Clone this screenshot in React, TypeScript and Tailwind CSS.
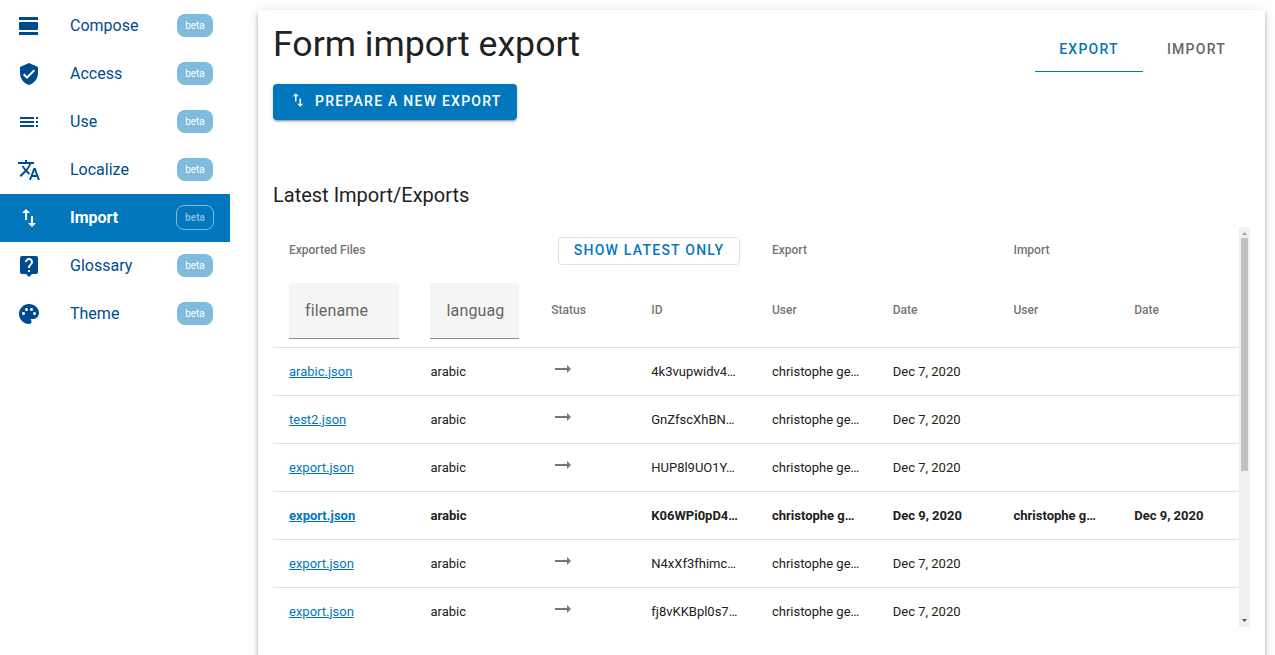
import type { IconType } from "react-icons";
import {
  MdArrowRightAlt,
  MdImportExport,
  MdLiveHelp,
  MdPalette,
  MdToc,
  MdTranslate,
  MdVerifiedUser,
} from "react-icons/md";

function ViewDay({ className }: { className?: string }) {
  return (
    <svg viewBox="0 0 24 24" fill="currentColor" className={className}>
      <path d="M2 21h19v-3H2v3zM20 8H3c-.55 0-1 .45-1 1v6c0 .55.45 1 1 1h17c.55 0 1-.45 1-1V9c0-.55-.45-1-1-1zM2 3v3h19V3H2z" />
    </svg>
  );
}

type NavEntry = { label: string; Icon: IconType | typeof ViewDay; active?: boolean };

const nav: NavEntry[] = [
  { label: "Compose", Icon: ViewDay },
  { label: "Access", Icon: MdVerifiedUser },
  { label: "Use", Icon: MdToc },
  { label: "Localize", Icon: MdTranslate },
  { label: "Import", Icon: MdImportExport, active: true },
  { label: "Glossary", Icon: MdLiveHelp },
  { label: "Theme", Icon: MdPalette },
];

type Row = {
  file: string;
  lang: string;
  id: string;
  user: string;
  date: string;
  importUser?: string;
  importDate?: string;
};

const rows: Row[] = [
  { file: "arabic.json", lang: "arabic", id: "4k3vupwidv4…", user: "christophe ge…", date: "Dec 7, 2020" },
  { file: "test2.json", lang: "arabic", id: "GnZfscXhBN…", user: "christophe ge…", date: "Dec 7, 2020" },
  { file: "export.json", lang: "arabic", id: "HUP8l9UO1Y…", user: "christophe ge…", date: "Dec 7, 2020" },
  {
    file: "export.json",
    lang: "arabic",
    id: "K06WPi0pD4…",
    user: "christophe g…",
    date: "Dec 9, 2020",
    importUser: "christophe g…",
    importDate: "Dec 9, 2020",
  },
  { file: "export.json", lang: "arabic", id: "N4xXf3fhimc…", user: "christophe ge…", date: "Dec 7, 2020" },
  { file: "export.json", lang: "arabic", id: "fj8vKKBpl0s7…", user: "christophe ge…", date: "Dec 7, 2020" },
];

const columns = "grid grid-cols-[141.5px_120.5px_100.25px_repeat(5,120.75px)]";

function NavItem({ label, Icon, active }: NavEntry) {
  return (
    <a
      className={`flex h-12 items-center pl-[17px] pr-4 ${
        active ? "bg-[#0277bd] font-bold text-white" : "text-[#004b8d]"
      }`}
    >
      <Icon className="h-6 w-6 shrink-0" />
      <span className="ml-[29px] flex-1 text-base leading-6">{label}</span>
      <span
        className={`mb-[1px] flex items-center justify-center rounded-[8px] pt-px text-[10px] leading-none ${
          active
            ? "h-[25px] w-[38px] border border-[#80bbde] font-bold text-[#80bbde]"
            : "mr-px h-[23px] w-9 bg-[#80bbde] font-normal text-white"
        }`}
      >
        beta
      </span>
    </a>
  );
}

function Filter({ text, className }: { text: string; className: string }) {
  return (
    <div
      className={`flex h-14 items-center overflow-hidden rounded-t border-b border-[#8e8e8e] bg-[#f5f5f5] text-base tracking-[0.15px] text-[#666] ${className}`}
    >
      {text}
    </div>
  );
}

function TableRow({ row }: { row: Row }) {
  const bold = Boolean(row.importUser);
  return (
    <div
      className={`${columns} h-12 items-center border-t border-[#e0e0e0] text-[13px] leading-5 text-[#212121] ${
        bold ? "font-bold" : ""
      }`}
    >
      <div className="pl-4">
        <a className="text-[#0277bd] underline">{row.file}</a>
      </div>
      <div className="pl-4">{row.lang}</div>
      <div className="pb-[5px] pl-4">{!bold && <MdArrowRightAlt className="h-6 w-6 text-[#757575]" />}</div>
      <div className="pl-4">{row.id}</div>
      <div className="pl-4">{row.user}</div>
      <div className="pl-4">{row.date}</div>
      <div className="pl-4">{row.importUser}</div>
      <div className="pl-4">{row.importDate}</div>
    </div>
  );
}

export default function App() {
  return (
    <div className="flex h-[655px] w-[1275px] overflow-hidden bg-white font-[Roboto,sans-serif] text-[#212121]">
      <nav className="mt-[2px] w-[230px] shrink-0">
        {nav.map((entry) => (
          <NavItem key={entry.label} {...entry} />
        ))}
      </nav>

      <main className="ml-7 mt-[10px] h-[700px] w-[1007px] shrink-0 bg-white px-[15px] shadow-[0_2px_4px_-1px_rgba(0,0,0,0.2),0_4px_5px_0_rgba(0,0,0,0.14),0_1px_10px_0_rgba(0,0,0,0.12)]">
        <header className="flex h-[74px] justify-between">
          <h1 className="pt-[10px] text-[35.65px] leading-[49px]">Form import export</h1>
          <div className="mt-[14px] flex h-12 text-sm font-medium tracking-[1.25px]">
            <div className="flex w-[108px] items-center justify-center border-b border-[#0277bd] pt-[2px] text-[#0277bd]">
              EXPORT
            </div>
            <div className="flex w-[107px] items-center justify-center border-b border-transparent pt-[2px] text-[#666]">
              IMPORT
            </div>
          </div>
        </header>

        <button className="flex h-9 w-[244px] items-center rounded bg-[#0277bd] pb-[3px] pl-4 text-sm font-medium tracking-[1.25px] text-white shadow-[0_3px_1px_-2px_rgba(0,0,0,0.2),0_2px_2px_0_rgba(0,0,0,0.14),0_1px_5px_0_rgba(0,0,0,0.12)]">
          <MdImportExport className="mb-px mr-2 h-[18px] w-[18px]" />
          PREPARE A NEW EXPORT
        </button>

        <h2 className="mt-[59px] text-xl leading-8">Latest Import/Exports</h2>

        <section className="mt-4 flex h-[400px] w-[977px]">
          <div className="w-[966px] overflow-hidden">
            <div className="flex h-14 items-start text-xs font-medium leading-[46px] text-[#757575]">
              <div className="w-[285px] pl-4">Exported Files</div>
              <button className="mt-[10px] flex h-7 w-[182px] items-center justify-center rounded border border-[#e0e0e0] pb-[2px] text-sm font-medium tracking-[1.25px] text-[#0277bd]">
                SHOW LATEST ONLY
              </button>
              <div className="w-[241.5px] pl-8">Export</div>
              <div className="pl-8">Import</div>
            </div>

            <div className={`${columns} h-16 items-start text-xs font-medium leading-[54px] text-[#757575]`}>
              <div className="pl-4 font-normal">
                <Filter text="filename" className="w-[110px] pl-4" />
              </div>
              <div className="pl-[15.5px] font-normal">
                <Filter text="languag" className="w-[89px] pl-[16.5px]" />
              </div>
              <div className="pl-[16.3px]">Status</div>
              <div className="pl-4">ID</div>
              <div className="pl-4">User</div>
              <div className="pl-4">Date</div>
              <div className="pl-4">User</div>
              <div className="pl-4">Date</div>
            </div>

            {rows.map((row, i) => (
              <TableRow key={i} row={row} />
            ))}
          </div>

          <div className="flex w-[11px] flex-col items-center bg-[#f1f1f1]">
            <svg viewBox="0 0 11 11" className="h-[11px] w-[11px] shrink-0" fill="#a3a3a3">
              <path d="M5.5 5L8 8H3z" />
            </svg>
            <div className="h-[233px] w-[7px] bg-[#c1c1c1]" />
            <div className="flex-1" />
            <svg viewBox="0 0 11 11" className="h-[11px] w-[11px] shrink-0" fill="#505050">
              <path d="M3 3H8L5.500 6z" />
            </svg>
          </div>
        </section>
      </main>
    </div>
  );
}
